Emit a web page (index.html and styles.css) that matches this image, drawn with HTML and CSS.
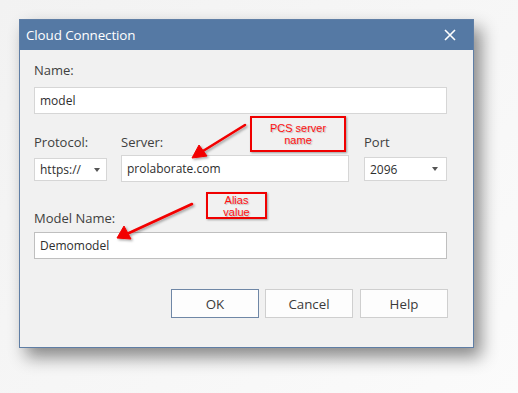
FILE: index.html
```html
<!DOCTYPE html>
<html>
<head>
<meta charset="utf-8">
<link rel="stylesheet" href="styles.css">
</head>
<body>
<div class="page">
  <div class="dialog">
    <div class="titlebar">
      <span class="title">Cloud Connection</span>
      <svg class="close" width="12" height="12" viewBox="0 0 12 12"><path d="M1 1L11 11M11 1L1 11" stroke="#fff" stroke-width="1.6"/></svg>
    </div>
    <div class="content">
      <div class="label name-label">Name:</div>
      <div class="field name-field">model</div>
      <div class="row">
        <div class="col col-protocol">
          <div class="label">Protocol:</div>
          <div class="field select protocol-select"><span>https://</span><span class="caret"></span></div>
        </div>
        <div class="col col-server">
          <div class="label">Server:</div>
          <div class="field server-field">prolaborate.com</div>
        </div>
        <div class="col col-port">
          <div class="label">Port</div>
          <div class="field select port-select"><span>2096</span><span class="caret"></span></div>
        </div>
      </div>
      <div class="label model-label">Model Name:</div>
      <div class="field model-field">Demomodel</div>
      <div class="buttons">
        <div class="btn btn-default">OK</div>
        <div class="btn btn-cancel">Cancel</div>
        <div class="btn">Help</div>
      </div>
    </div>
  </div>
  <div class="note note-pcs">PCS server<br>name</div>
  <div class="note note-alias">Alias<br>value</div>
  <svg class="arrows" width="518" height="393" viewBox="0 0 518 393">
    <defs>
      <filter id="sh" x="-20%" y="-20%" width="140%" height="140%">
        <feDropShadow dx="1.5" dy="1.5" stdDeviation="1" flood-color="#000" flood-opacity="0.35"/>
      </filter>
    </defs>
    <g filter="url(#sh)" fill="#f20000" stroke="#f20000">
      <line x1="245" y1="125" x2="203" y2="151" stroke-width="2.6" stroke-linecap="round"/>
      <polygon points="192,158 199,145 207,156" stroke-width="1" stroke-linejoin="round"/>
      <line x1="192" y1="204" x2="129" y2="233" stroke-width="2.6" stroke-linecap="round"/>
      <polygon points="117,238 124,226 131,239" stroke-width="1" stroke-linejoin="round"/>
    </g>
  </svg>
</div>
</body>
</html>
```
FILE: styles.css
```css
html, body {
  margin: 0;
  padding: 0;
}
body {
  background: #f5f5f5;
  font-family: "Open Sans", "Noto Sans", sans-serif;
  width: 518px;
  height: 393px;
  overflow: hidden;
}
.page {
  position: relative;
  width: 518px;
  height: 393px;
  padding: 19px 0 0 19px;
  box-sizing: border-box;
  background: linear-gradient(135deg, #f2f2f2 0%, #f7f7f7 60%, #fbfbfb 100%);
}
.dialog {
  width: 455px;
  height: 329px;
  box-sizing: border-box;
  border: 1px solid #5f7ea5;
  background: #f1f1f1;
  box-shadow: 7px 9px 16px rgba(0, 0, 0, 0.45);
  display: flex;
  flex-direction: column;
}
.titlebar {
  height: 30px;
  flex: none;
  background: #5579a4;
  display: flex;
  align-items: center;
  justify-content: space-between;
  padding: 0 17px 0 6px;
}
.title {
  color: #fff;
  font-size: 13.4px;
  letter-spacing: -0.1px;
}
.close {
  display: block;
}
.content {
  padding: 12px 26px 0 14px;
  display: flex;
  flex-direction: column;
}
.label {
  font-size: 13px;
  line-height: 16px;
  color: #404040;
  height: 16px;
}
.field {
  background: #fff;
  border: 1px solid #d6d6d6;
  box-sizing: border-box;
  font-size: 12px;
  color: #2e2e2e;
  display: flex;
  align-items: center;
  padding: 0 5px;
}
.name-label {
  margin-bottom: 9px;
}
.name-field {
  height: 27px;
}
.row {
  display: flex;
  margin-top: 20px;
}
.col {
  display: flex;
  flex-direction: column;
}
.col-protocol {
  width: 73px;
}
.col-server {
  width: 228px;
  margin-left: 14px;
}
.col-port {
  width: 83px;
  margin-left: 15px;
}
.protocol-select {
  height: 23px;
  margin-top: 8px;
  padding-right: 6px;
}
.server-field {
  height: 27px;
  margin-top: 5px;
}
.port-select {
  height: 24px;
  margin-top: 7px;
  padding-right: 8px;
}
.select {
  justify-content: space-between;
}
.caret {
  width: 0;
  height: 0;
  border-left: 3.5px solid transparent;
  border-right: 3.5px solid transparent;
  border-top: 4px solid #555;
}
.model-label {
  margin-top: 28px;
  margin-bottom: 6px;
}
.model-field {
  height: 27px;
  border-color: #bfbfbf;
}
.buttons {
  display: flex;
  justify-content: flex-end;
  margin-top: 30px;
  margin-right: -1px;
}
.btn {
  width: 88px;
  height: 29px;
  box-sizing: border-box;
  border: 1px solid #cfcfcf;
  background: #fdfdfd;
  font-size: 13.3px;
  color: #3a3a3a;
  display: flex;
  align-items: center;
  justify-content: center;
}
.btn-default {
  border-color: #6f87a6;
}
.btn-cancel {
  margin-left: 6px;
  margin-right: 7px;
}
.note {
  position: absolute;
  box-sizing: border-box;
  border: 2px solid #f00000;
  background: #f1f1f1;
  color: #ff1010;
  font-family: "Liberation Sans", Arial, sans-serif;
  font-size: 11px;
  line-height: 12px;
  text-align: center;
  text-shadow: 1px 1px 1px rgba(0, 0, 0, 0.22);
  box-shadow: 1px 1px 2px rgba(0, 0, 0, 0.35);
  display: flex;
  align-items: flex-start;
  justify-content: center;
}
.note-pcs {
  left: 250px;
  top: 116px;
  width: 96px;
  height: 36px;
  padding-top: 4px;
}
.note-alias {
  left: 206px;
  top: 192px;
  width: 61px;
  height: 27px;
  padding-top: 0px;
}
.arrows {
  position: absolute;
  left: 0;
  top: 0;
  pointer-events: none;
}
```
